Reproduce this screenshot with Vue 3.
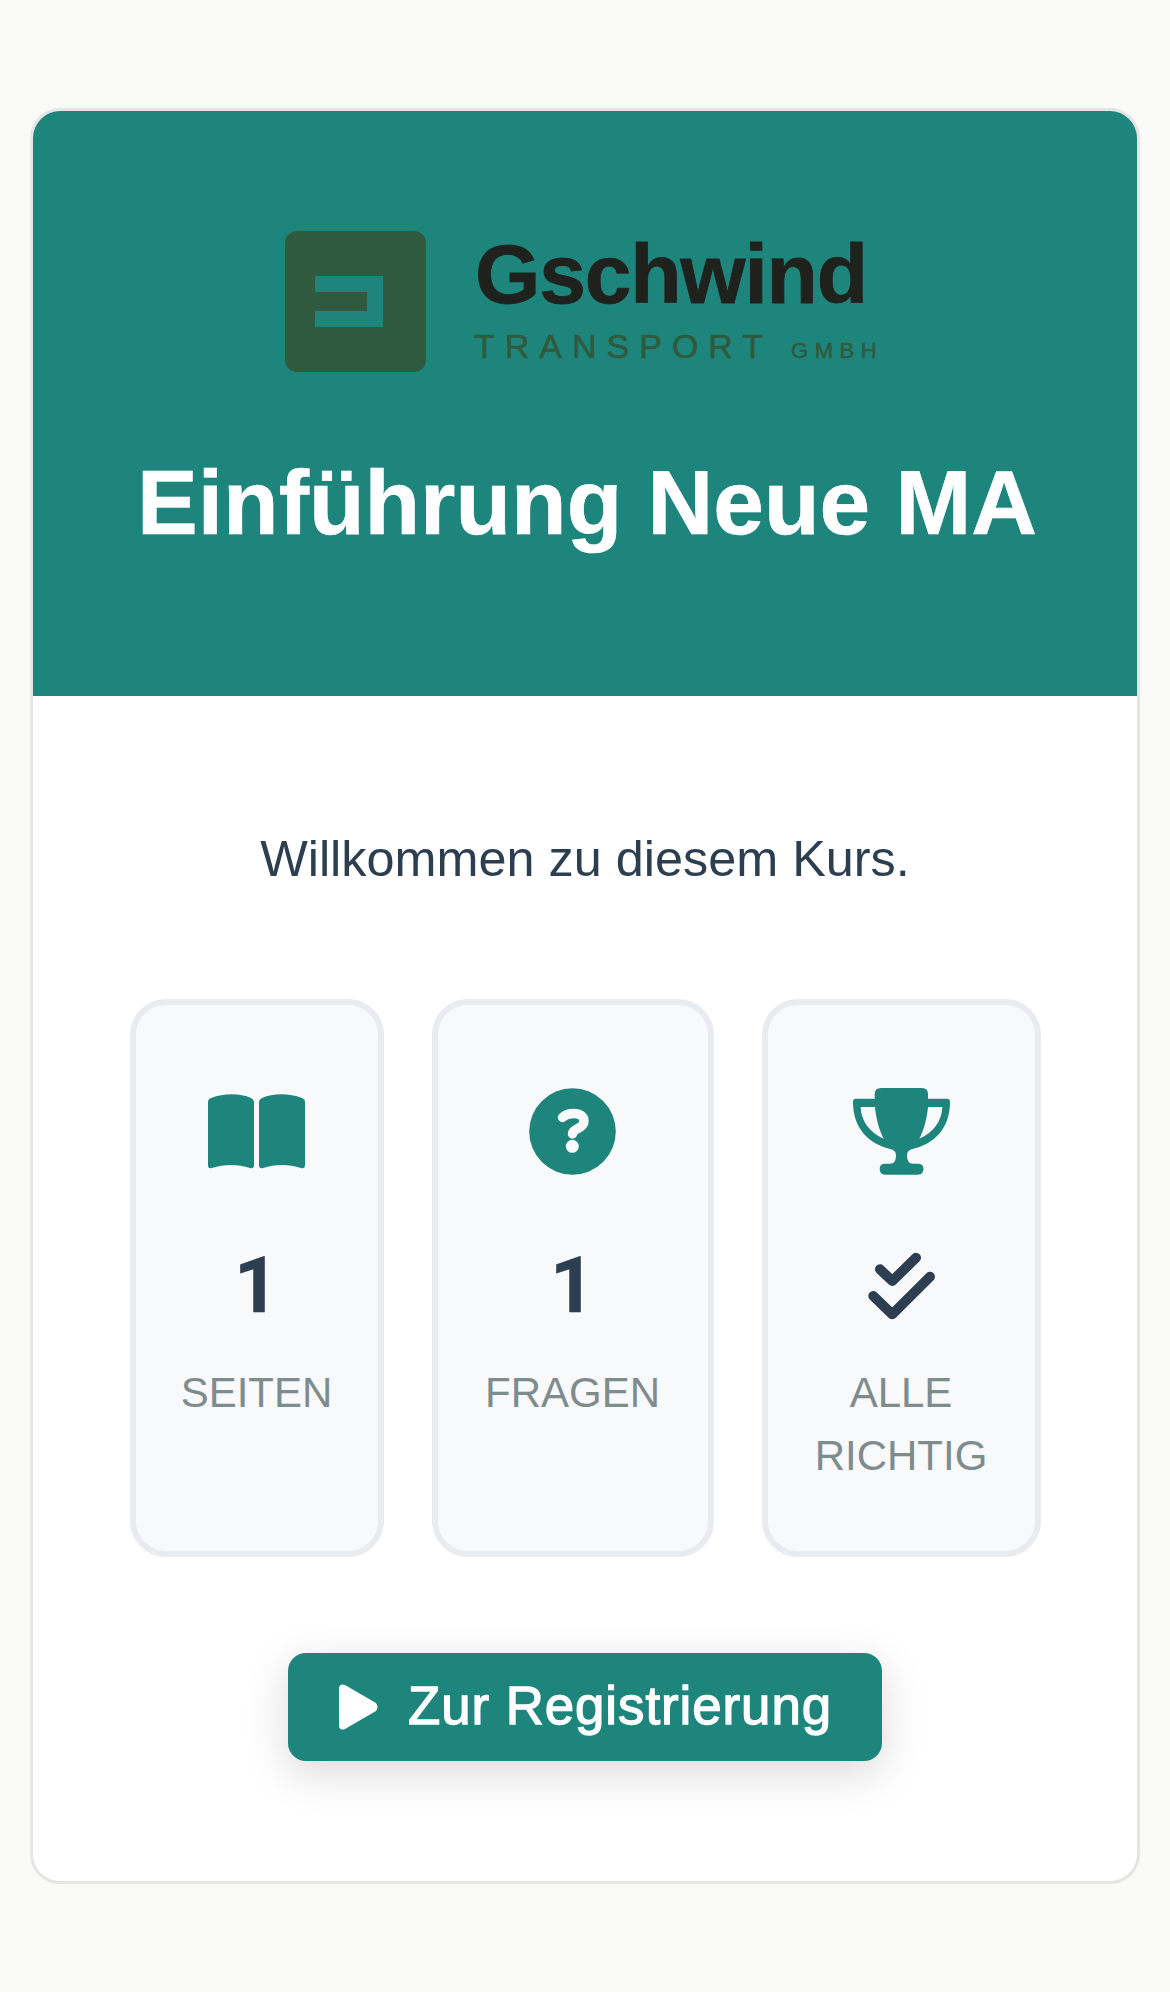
<script setup>
const stats = [
  { icon: 'book', value: '1', label: ['SEITEN'] },
  { icon: 'question', value: '1', label: ['FRAGEN'] },
  { icon: 'trophy', value: null, label: ['ALLE', 'RICHTIG'] }
]
</script>

<template>
  <div class="page">
    <div class="card">
      <div class="header">
        <div class="logo">
          <div class="logo-mark">
            <svg class="logo-glyph" width="68" height="51" viewBox="0 0 68 51">
              <path d="M0 0H68V51H0V35H52V16H0Z" fill="#1e857c" />
            </svg>
          </div>
          <div class="logo-text">
            <div class="logo-name">Gschwind</div>
            <div class="logo-sub">
              <span class="logo-transport">TRANSPORT</span>
              <span class="logo-gmbh">GMBH</span>
            </div>
          </div>
        </div>
        <h1>Einführung Neue MA</h1>
      </div>

      <div class="content">
        <p class="welcome">Willkommen zu diesem Kurs.</p>

        <div class="stats">
          <div v-for="stat in stats" :key="stat.label[0]" class="stat">
            <div class="stat-icon">
              <svg v-if="stat.icon === 'book'" width="97" height="75" viewBox="0 0 97 75" fill="#1e857c">
                <path d="M0 8Q0 5 3 4C16 -1 32 -1 43 4Q46 5.5 46 8V71Q46 75 42 74C30 70 16 70 4 74Q0 75 0 71Z" />
                <path d="M97 8Q97 5 94 4C81 -1 65 -1 54 4Q51 5.5 51 8V71Q51 75 55 74C67 70 81 70 93 74Q97 75 97 71Z" />
              </svg>
              <svg v-else-if="stat.icon === 'question'" width="87" height="87" viewBox="0 0 87 87">
                <circle cx="43.5" cy="43.5" r="43.3" fill="#1e857c" />
                <path d="M33.5 29.5C37 26 41 25.5 45 25.5C51 25.5 55 28.5 55 33C55 37 52 39 48 41C45 42.5 43.5 43.5 43.5 46" fill="none" stroke="#f8f9fa" stroke-width="9.5" stroke-linecap="round" />
                <circle cx="43.3" cy="58.3" r="6.5" fill="#f8f9fa" />
              </svg>
              <svg v-else width="97" height="87" viewBox="0 0 97 87">
                <path fill="#1e857c" fill-rule="evenodd" d="M21.7 10.7V6Q21.7 0 28 0H69Q75 0 75 6V10.7H94Q97 10.7 97 14C97 40 82 56 58 61.5Q54 63 54 67.5Q54 75.7 60 75.7H65Q70.5 75.7 70.5 81Q70.5 86.7 65 86.7H32Q26.7 86.7 26.7 81Q26.7 75.7 32 75.7H37Q43 75.7 43 67.5Q43 63 39 61.5C15 56 0 40 0 14Q0 10.7 3 10.7ZM7.7 19H22C23 30 26 42 30.7 50.7C17 45 8 33 7.7 19ZM89.3 19H75C74 30 71 42 66.3 50.7C80 45 89 33 89.3 19Z" />
              </svg>
            </div>
            <div class="stat-value">
              <template v-if="stat.value">{{ stat.value }}</template>
              <svg v-else width="67" height="68" viewBox="0 0 67 68" fill="none" stroke="#2c3e50" stroke-width="10" stroke-linecap="round" stroke-linejoin="round">
                <path d="M12 17.3L24.3 29L48 5.7" />
                <path d="M5.3 44L24.3 62.3L62 24.7" />
              </svg>
            </div>
            <div class="stat-label">
              <div v-for="line in stat.label" :key="line">{{ line }}</div>
            </div>
          </div>
        </div>

        <button class="start-btn">
          <svg width="40" height="46" viewBox="0 0 40 46">
            <path d="M0 5Q0 -1 6 1L37 19Q40 23 37 27L6 45Q0 47 0 41Z" fill="#fff" />
          </svg>
          <span class="start-label">Zur Registrierung</span>
        </button>
      </div>
    </div>
  </div>
</template>

<style>
html,
body {
  margin: 0;
  background: #fafaf9;
}
</style>

<style scoped>
.page {
  min-height: 1992px;
  box-sizing: border-box;
  padding: 108px 30px;
  font-family: "Liberation Sans", Arial, sans-serif;
}

.card {
  background: #fff;
  border: 3px solid #e5e5e3;
  border-radius: 30px;
  overflow: hidden;
  height: 1776px;
  box-sizing: border-box;
}

.header {
  background: #1e857c;
  height: 585px;
  box-sizing: border-box;
  padding-top: 120px;
  text-align: center;
}

.logo {
  display: flex;
  justify-content: center;
  gap: 49px;
  height: 141px;
}

.logo-mark {
  width: 141px;
  height: 141px;
  background: #2f5a3d;
  border-radius: 12px;
  display: flex;
  align-items: center;
  justify-content: center;
}

.logo-glyph {
  margin-right: 13px;
}

.logo-text {
  width: 410px;
  text-align: left;
}

.logo-name {
  margin-top: 3px;
  font-size: 84px;
  font-weight: 700;
  line-height: 80px;
  letter-spacing: -1.2px;
  -webkit-text-stroke: 0.8px #1f211c;
  color: #1f211c;
}

.logo-sub {
  display: flex;
  align-items: baseline;
  margin-left: -1px;
  margin-top: 15px;
  color: #2f5a3d;
  line-height: 34px;
  -webkit-text-stroke: 0.6px #2f5a3d;
}

.logo-transport {
  font-size: 34px;
  letter-spacing: 10px;
  margin-right: 18px;
}

.logo-gmbh {
  font-size: 22px;
  letter-spacing: 6.5px;
}

h1 {
  margin: 76px 0 0;
  padding: 1px 0 0 4px;
  font-size: 91px;
  line-height: 108px;
  font-weight: 700;
  color: #fff;
  -webkit-text-stroke: 0.6px #fff;
}

.content {
  padding-top: 131px;
  text-align: center;
}

.welcome {
  margin: 0;
  font-size: 50.4px;
  line-height: 64px;
  color: #2c3e50;
}

.stats {
  display: grid;
  grid-template-columns: 254px 282px 279px;
  justify-content: center;
  gap: 48px;
  margin-top: 108px;
}

.stat {
  height: 558px;
  box-sizing: border-box;
  background: #f8f9fa;
  border: 6px solid #e9ecef;
  border-radius: 36px;
  padding-top: 83px;
}

.stat-icon {
  height: 87px;
  display: flex;
  align-items: center;
  justify-content: center;
}

.stat-value {
  margin-top: 77px;
  height: 68px;
  display: flex;
  align-items: center;
  justify-content: center;
  font-family: Roboto, "Liberation Sans", sans-serif;
  font-size: 78px;
  font-weight: 700;
  line-height: 68px;
  color: #2c3e50;
  -webkit-text-stroke: 0.5px #2c3e50;
}

.stat-value svg {
  -webkit-text-stroke: 0;
}

.stat-label {
  margin-top: 41px;
  font-size: 42px;
  line-height: 63px;
  color: #7f8c8d;
}

.start-btn {
  display: inline-flex;
  align-items: center;
  gap: 29px;
  width: 594px;
  height: 108px;
  box-sizing: border-box;
  margin-top: 96px;
  padding: 0 0 0 51px;
  border: none;
  border-radius: 18px;
  background: #1e857c;
  color: #fff;
  font-family: inherit;
  font-size: 52.8px;
  letter-spacing: 0.95px;
  -webkit-text-stroke: 1.3px #fff;
  box-shadow: 0 12px 45px rgba(0, 0, 0, 0.15);
  cursor: pointer;
}

.start-label {
  margin-top: -3px;
}
</style>
